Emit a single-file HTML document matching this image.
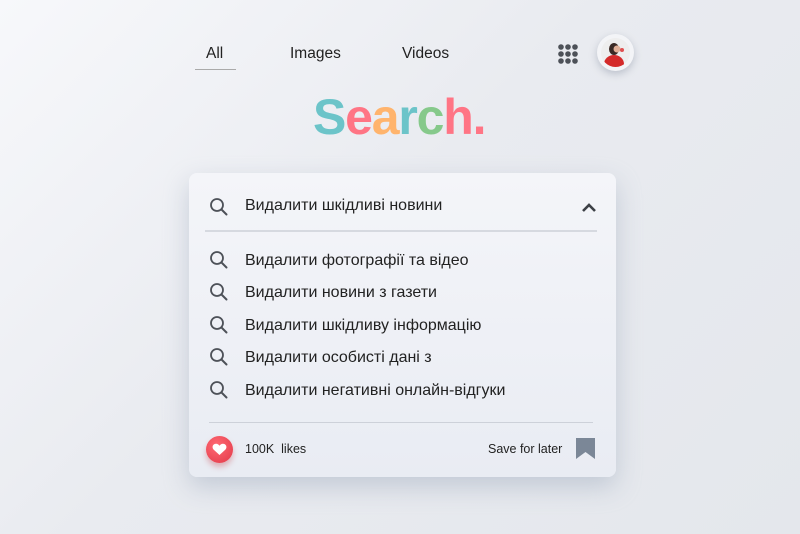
<!DOCTYPE html>
<html><head><meta charset="utf-8"><style>
body{margin:0;width:800px;height:534px;overflow:hidden;font-family:"Liberation Sans","DejaVu Sans",sans-serif;background:linear-gradient(135deg,#f7f8fb 0%,#e9ebf0 45%,#e4e7ec 100%);position:relative;color:#222}
.tab{position:absolute;top:45px;font-size:15.5px;color:#222}
.logo{position:absolute;left:313px;top:92px;font-size:50px;font-weight:bold;letter-spacing:-1.2px;line-height:1}
.card{position:absolute;left:189px;top:173px;width:427px;height:304px;border-radius:8px;background:linear-gradient(180deg,#f4f5f9,#e9ecf3);box-shadow:0 10px 25px rgba(150,165,185,.45)}
.row{position:absolute;left:56px;font-size:16px;color:#222}
.ic{position:absolute;left:19px}
</style></head><body>
<div class="tab" style="left:206px">All</div>
<div style="position:absolute;left:195px;top:69px;width:41px;height:1px;background:#aaa"></div>
<div class="tab" style="left:290px">Images</div>
<div class="tab" style="left:402px">Videos</div>
<svg style="position:absolute;left:558px;top:44px" width="20" height="20">
<g fill="#4d5158"><circle cx="3" cy="3" r="2.8"/><circle cx="10" cy="3" r="2.8"/><circle cx="17" cy="3" r="2.8"/><circle cx="3" cy="10" r="2.8"/><circle cx="10" cy="10" r="2.8"/><circle cx="17" cy="10" r="2.8"/><circle cx="3" cy="17" r="2.8"/><circle cx="10" cy="17" r="2.8"/><circle cx="17" cy="17" r="2.8"/></g></svg>
<div style="position:absolute;left:597px;top:34px;width:37px;height:37px;border-radius:50%;background:#f3f4f7;box-shadow:0 3px 8px rgba(120,130,150,.4)"></div>
<svg style="position:absolute;left:601px;top:38px" width="29" height="29"><clipPath id="c"><circle cx="14.5" cy="14.5" r="14.5"/></clipPath><g clip-path="url(#c)"><rect width="29" height="29" fill="#eee"/><ellipse cx="13" cy="26" rx="10" ry="9" fill="#d42a2a"/><ellipse cx="13" cy="11" rx="5" ry="6" fill="#3a2a25"/><circle cx="16" cy="11" r="3.5" fill="#e0b098"/><circle cx="21" cy="12" r="2" fill="#e05050"/></g></svg>
<div class="logo"><span style="color:#6cc4c9">S</span><span style="color:#ff7585">e</span><span style="color:#ffb46d">a</span><span style="color:#6cc4c9">r</span><span style="color:#86c98b">c</span><span style="color:#ff7585">h.</span></div>
<div class="card">
<svg class="ic" style="top:23px" width="22" height="22"><circle cx="9" cy="9" r="6" fill="none" stroke="#4d5158" stroke-width="1.8"/><path d="M13.5 13.5l5 5" stroke="#4d5158" stroke-width="2" stroke-linecap="round"/></svg>
<div class="row" style="top:24px">Видалити шкідливі новини</div>
<svg style="position:absolute;left:392px;top:29px" width="16" height="12"><path d="M2 9l6-6 6 6" fill="none" stroke="#3d4046" stroke-width="2.6"/></svg>
<div style="position:absolute;left:16px;top:57px;width:392px;height:2px;background:#d6d9e0"></div>
<svg class="ic" style="top:76px" width="22" height="22"><circle cx="9" cy="9" r="6" fill="none" stroke="#4d5158" stroke-width="1.8"/><path d="M13.5 13.5l5 5" stroke="#4d5158" stroke-width="2" stroke-linecap="round"/></svg>
<div class="row" style="top:79px">Видалити фотографії та відео</div>
<svg class="ic" style="top:108px" width="22" height="22"><circle cx="9" cy="9" r="6" fill="none" stroke="#4d5158" stroke-width="1.8"/><path d="M13.5 13.5l5 5" stroke="#4d5158" stroke-width="2" stroke-linecap="round"/></svg>
<div class="row" style="top:111px">Видалити новини з газети</div>
<svg class="ic" style="top:141px" width="22" height="22"><circle cx="9" cy="9" r="6" fill="none" stroke="#4d5158" stroke-width="1.8"/><path d="M13.5 13.5l5 5" stroke="#4d5158" stroke-width="2" stroke-linecap="round"/></svg>
<div class="row" style="top:144px">Видалити шкідливу інформацію</div>
<svg class="ic" style="top:173px" width="22" height="22"><circle cx="9" cy="9" r="6" fill="none" stroke="#4d5158" stroke-width="1.8"/><path d="M13.5 13.5l5 5" stroke="#4d5158" stroke-width="2" stroke-linecap="round"/></svg>
<div class="row" style="top:176px">Видалити особисті дані з</div>
<svg class="ic" style="top:206px" width="22" height="22"><circle cx="9" cy="9" r="6" fill="none" stroke="#4d5158" stroke-width="1.8"/><path d="M13.5 13.5l5 5" stroke="#4d5158" stroke-width="2" stroke-linecap="round"/></svg>
<div class="row" style="top:209px">Видалити негативні онлайн-відгуки</div>
<div style="position:absolute;left:20px;top:249px;width:384px;height:1px;background:#cdd1d9"></div>
<div style="position:absolute;left:17px;top:263px;width:27px;height:27px;border-radius:50%;background:radial-gradient(circle at 40% 35%,#ff6a74,#e23848);box-shadow:0 4px 6px rgba(200,60,70,.35)"></div>
<svg style="position:absolute;left:23px;top:270px" width="15" height="13"><path d="M7.5 12L1.5 6.5C-0.5 4 1 0.8 4 0.8c1.6 0 2.8 1 3.5 2 .7-1 1.9-2 3.5-2 3 0 4.5 3.2 2.5 5.7z" fill="#fff"/></svg>
<div style="position:absolute;left:56px;top:269px;font-size:12.5px">100K&nbsp; likes</div>
<div style="position:absolute;left:299px;top:269px;font-size:12.5px">Save for later</div>
<svg style="position:absolute;left:387px;top:265px" width="20" height="22"><path d="M0 0h19v21l-9.5-7L0 21z" fill="#7b8797"/></svg>
</div>
</body></html>
